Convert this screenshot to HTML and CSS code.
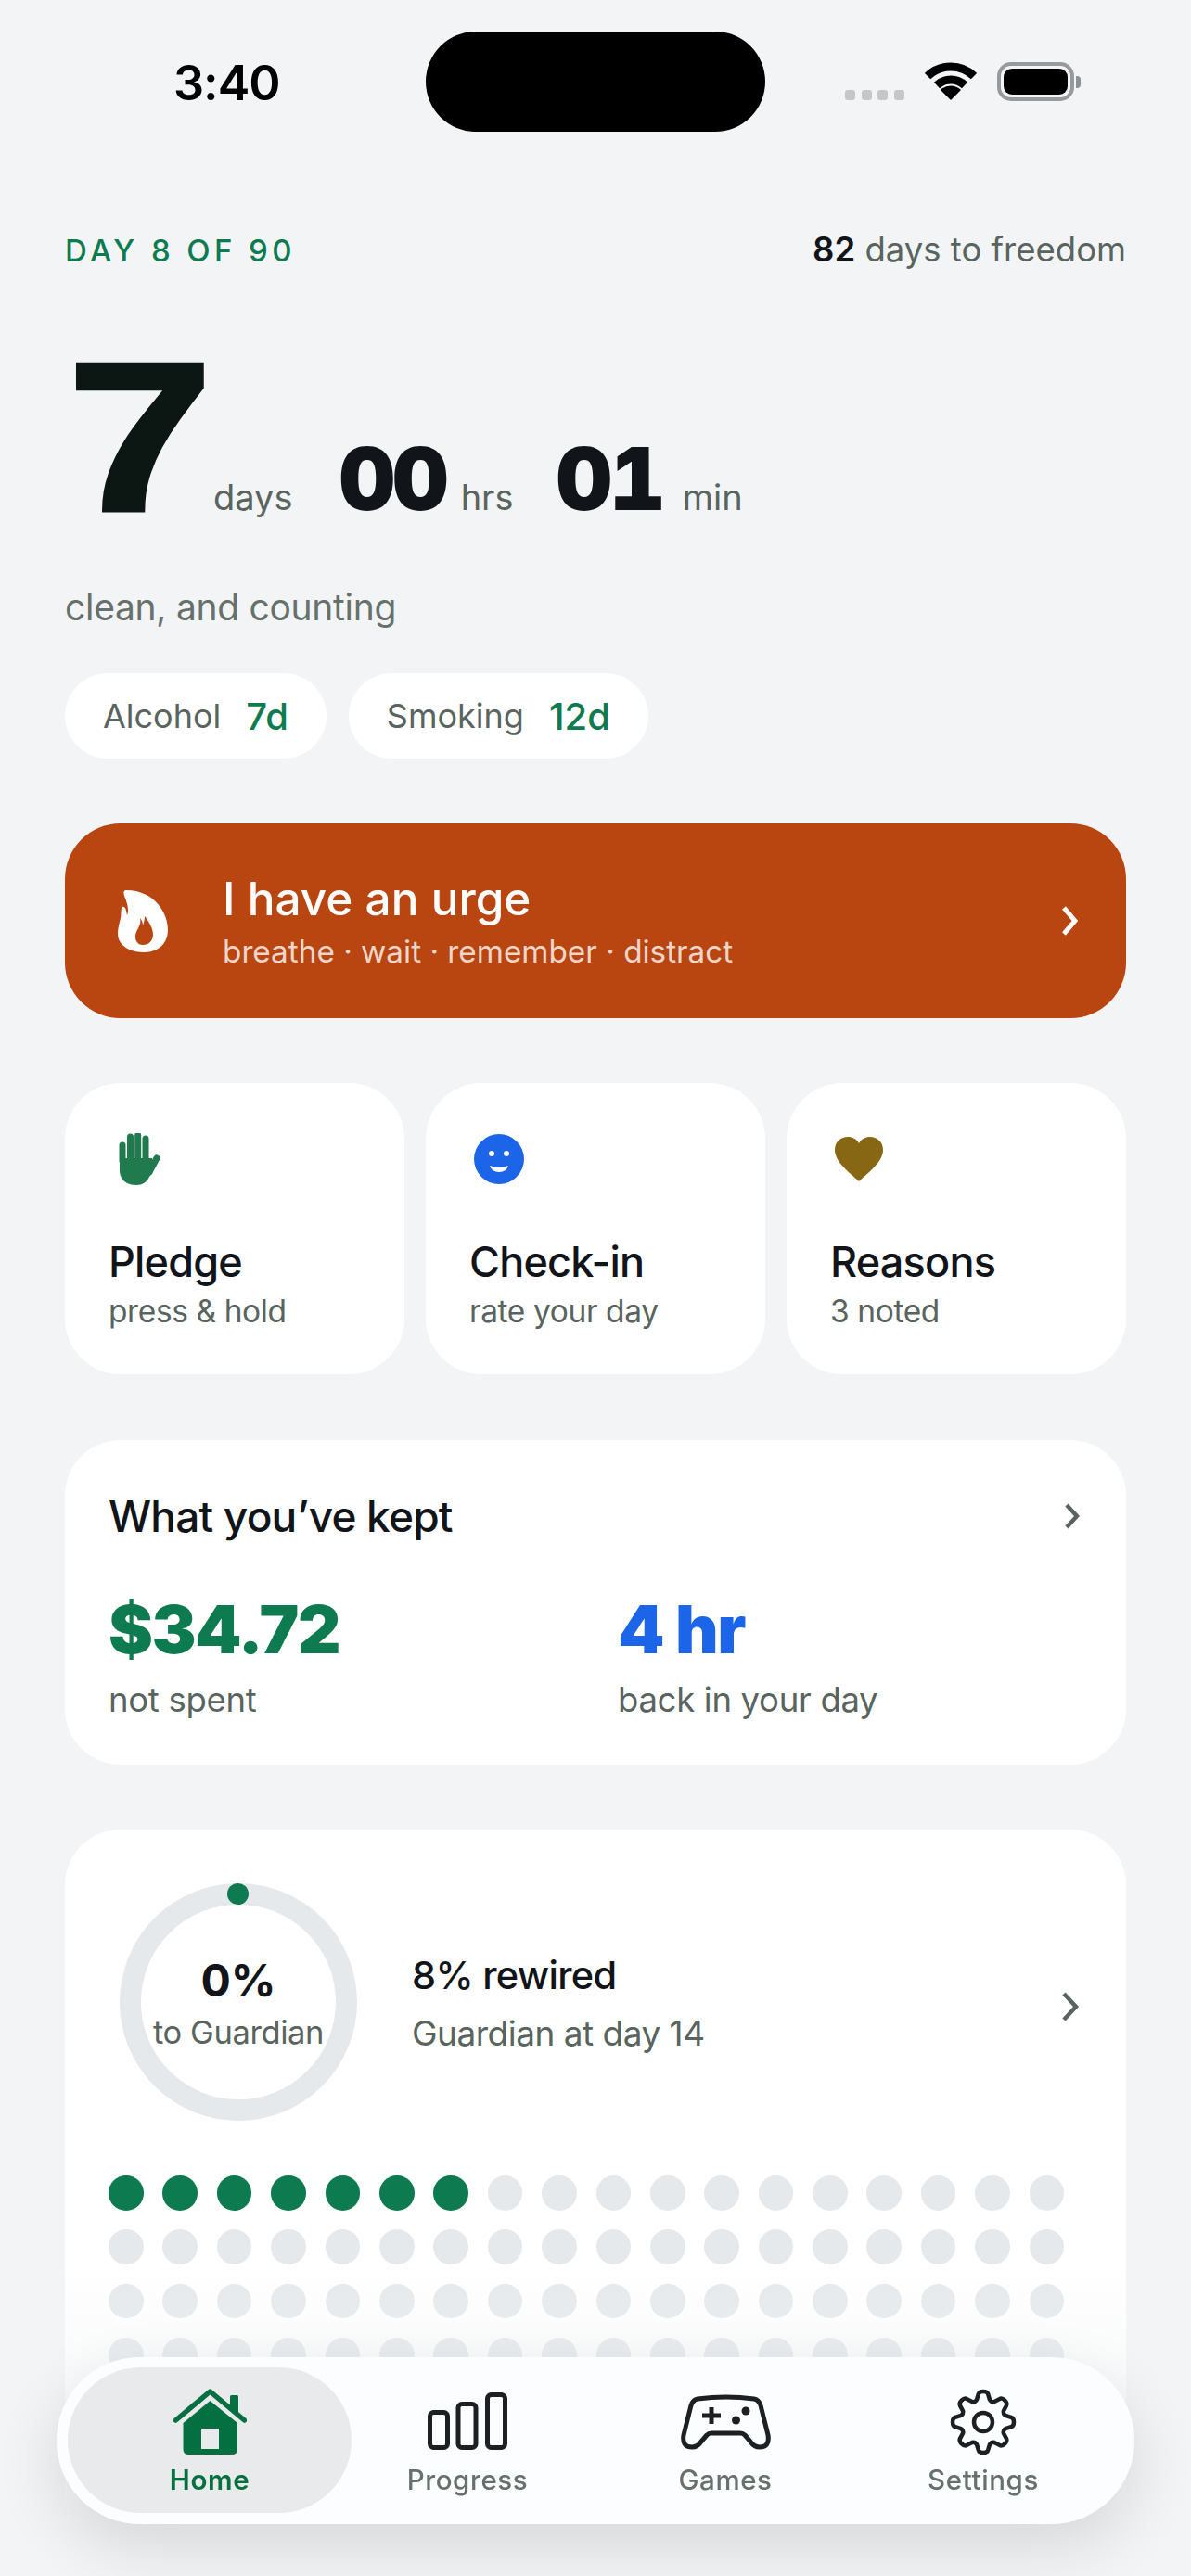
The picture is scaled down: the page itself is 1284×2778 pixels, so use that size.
FILE: index.html
```html
<!DOCTYPE html>
<html lang="en">
<head>
<meta charset="utf-8">
<title>Day 8 of 90</title>
<link rel="stylesheet" href="styles.css">
</head>
<body>
<div class="page">
  <div class="status">
    <span class="time">3:40</span>
    <div class="island"></div>
    <div class="signal"><i></i><i></i><i></i><i></i></div>
    <svg class="wifi" viewBox="0 0 56 41"><path class="wifi-arc" d="M3 15A36 36 0 0 1 53 15"/><path class="wifi-arc" d="M13 25A22 22 0 0 1 43 25"/><path d="M28 41L17 30A15.500 15.500 0 0 1 39 30Z"/></svg>
    <div class="battery"><div class="battery-fill"></div></div>
    <div class="battery-nub"></div>
  </div>

  <main class="content">
    <div class="head">
      <span class="day">DAY 8 OF 90</span>
      <span class="togo"><b>82</b> days to freedom</span>
    </div>

    <div class="counter">
      <span class="big">7</span><span class="unit u-days">days</span>
      <span class="mid m-hrs">00</span><span class="unit u-hrs">hrs</span>
      <span class="mid m-min">01</span><span class="unit u-min">min</span>
    </div>
    <p class="clean">clean, and counting</p>

    <div class="pills">
      <div class="pill">Alcohol<b>7d</b></div>
      <div class="pill">Smoking<b>12d</b></div>
    </div>

    <div class="urge">
      <svg class="flame" viewBox="0 0 54 68"><path fill="#fff" d="M9 1C6 1 6 4 7 7C11 16 12 24 10 28C9 22 8 18 5 19C3 20 4 26 3 31C1 39 0 43 0 48C0 60 12 68 28 68C44 68 54 58 54 44C54 26 40 1 9 1Z"/><path fill="#b94510" d="M24 31C25 36 24 38 21 44C17 51 19 60 27 60C36 60 40 52 37 43C35 37 32 33 29 29C29 33 28 36 27 39C27 36 26 33 24 31Z"/></svg>
      <div class="urge-text">
        <div class="urge-title">I have an urge</div>
        <div class="urge-sub">breathe · wait · remember · distract</div>
      </div>
      <svg class="urge-chev" viewBox="0 0 18 32"><path d="M3 2L15 16L3 30"/></svg>
    </div>

    <div class="actions">
      <div class="action">
        <svg class="ic ic-hand" viewBox="0 0 44 56"><g class="hand-f"><path d="M4 30V13"/><path d="M12.500 30V4"/><path d="M20.700 30V2.500"/><path d="M29 30V6"/><path d="M33 42L41 27"/></g><path fill="#1f7a4d" d="M1 27H36V40C33 49 29 56 19 56C8 56 1 50 1 40Z"/></svg>
        <div class="a-title">Pledge</div>
        <div class="a-sub">press &amp; hold</div>
      </div>
      <div class="action">
        <svg class="ic ic-face" viewBox="0 0 54 54"><circle cx="27" cy="27" r="27" fill="#1c64e8"/><circle cx="19" cy="21" r="3" fill="#fff"/><circle cx="35" cy="21" r="3" fill="#fff"/><path fill="#fff" d="M17 34Q27 38 37 34Q35 41 27 41Q19 41 17 34Z"/></svg>
        <div class="a-title">Check-in</div>
        <div class="a-sub">rate your day</div>
      </div>
      <div class="action">
        <svg class="ic ic-heart" viewBox="0 0 52 48"><path fill="#876614" d="M26 48C18 40 0 28 0 14C0 5 7 0 14 0C19 0 23 2 26 7C29 2 33 0 38 0C45 0 52 5 52 14C52 28 34 40 26 48Z"/></svg>
        <div class="a-title">Reasons</div>
        <div class="a-sub">3 noted</div>
      </div>
    </div>

    <section class="card kept">
      <div class="kept-head">
        <span class="kept-title">What you’ve kept</span>
        <svg class="chev" viewBox="0 0 16 28"><path d="M2 2L13 14L2 26"/></svg>
      </div>
      <div class="kept-row">
        <div class="kept-col"><div class="amount green">$34.72</div><div class="kept-sub">not spent</div></div>
        <div class="kept-col"><div class="amount blue">4 hr</div><div class="kept-sub">back in your day</div></div>
      </div>
    </section>

    <section class="card rewired">
      <div class="ring-row">
        <div class="ring">
          <div class="ring-dot"></div>
          <div class="ring-pct">0%</div>
          <div class="ring-sub">to Guardian</div>
        </div>
        <div class="ring-info">
          <div class="ring-title">8% rewired</div>
          <div class="ring-note">Guardian at day 14</div>
        </div>
        <svg class="chev chev-lg" viewBox="0 0 20 32"><path d="M3 2L16 16L3 30"/></svg>
      </div>
      <div class="dots">
        <i class="on"></i><i class="on"></i><i class="on"></i><i class="on"></i><i class="on"></i><i class="on"></i><i class="on"></i><i></i><i></i><i></i><i></i><i></i><i></i><i></i><i></i><i></i><i></i><i></i>
        <i></i><i></i><i></i><i></i><i></i><i></i><i></i><i></i><i></i><i></i><i></i><i></i><i></i><i></i><i></i><i></i><i></i><i></i>
        <i></i><i></i><i></i><i></i><i></i><i></i><i></i><i></i><i></i><i></i><i></i><i></i><i></i><i></i><i></i><i></i><i></i><i></i>
        <i></i><i></i><i></i><i></i><i></i><i></i><i></i><i></i><i></i><i></i><i></i><i></i><i></i><i></i><i></i><i></i><i></i><i></i>
        <i></i><i></i><i></i><i></i><i></i><i></i><i></i><i></i><i></i><i></i><i></i><i></i><i></i><i></i><i></i><i></i><i></i><i></i>
      </div>
    </section>
  </main>

  <div class="fade"></div>
  <nav class="tabbar">
    <div class="tab tab-active">
      <svg class="t-home" viewBox="0 0 79 71"><path class="roof" d="M2.500 34L39.500 3L76.500 34"/><path fill="#047041" d="M61 8.500Q61 7 62.500 7H68.500Q70 7 70 8.500V30L61 22Z"/><path fill="#047041" fill-rule="evenodd" d="M39.500 13L69 37V65Q69 71 63 71H16Q10.500 71 10.500 65V37ZM30 43V65H49V43Z"/></svg>
      <span>Home</span>
    </div>
    <div class="tab">
      <svg class="t-bars" viewBox="0 0 86 62"><rect x="2.500" y="21.500" width="19" height="38" rx="4"/><rect x="33" y="12.500" width="19" height="47" rx="4"/><rect x="64.500" y="2.500" width="19" height="57" rx="4"/></svg>
      <span>Progress</span>
    </div>
    <div class="tab">
      <svg class="t-game" viewBox="0 0 97 60"><path d="M18 5Q49 1 79 5Q84 6 86 12L94 44Q96 57 85 57Q79 57 75 51L69 44Q67 42 64 42H33Q30 42 28 44L22 51Q18 57 12 57Q1 57 3 44L11 12Q13 6 18 5Z"/><path d="M33 14V32M23 23H43"/><circle class="solid" cx="59.500" cy="28" r="4.500"/><circle class="solid" cx="70" cy="18" r="4.500"/></svg>
      <span>Games</span>
    </div>
    <div class="tab">
      <svg class="t-gear" viewBox="-36 -36 72 72">
        <defs><path id="tooth" d="M-9.180 -22.170Q-7.500 -22.800 -7 -24L-5.200 -30Q-4.500 -33 0 -33Q4.500 -33 5.200 -30L7 -24Q7.500 -22.800 9.180 -22.170"/></defs>
        <use href="#tooth"/><use href="#tooth" transform="rotate(45)"/><use href="#tooth" transform="rotate(90)"/><use href="#tooth" transform="rotate(135)"/><use href="#tooth" transform="rotate(180)"/><use href="#tooth" transform="rotate(225)"/><use href="#tooth" transform="rotate(270)"/><use href="#tooth" transform="rotate(315)"/>
        <circle cx="0" cy="0" r="10"/>
      </svg>
      <span>Settings</span>
    </div>
  </nav>
</div>
</body>
</html>
```

FILE: styles.css
```css
* { box-sizing: border-box; }
html, body { margin: 0; height: 2778px; overflow: hidden; }
body { background: #f2f4f6; font-family: Inter, "Liberation Sans", sans-serif; color: #11151a; }
.page { position: relative; width: 1284px; height: 2778px; overflow: hidden; }

/* status bar */
.status { display: flex; align-items: flex-start; height: 142px; padding: 34px 0 0 187px; }
.time { width: 272px; margin-top: 26px; font-size: 52px; line-height: 60px; font-weight: 600; letter-spacing: -1px; color: #000; }
.island { width: 366px; height: 108px; border-radius: 54px; background: #000; }
.signal { display: flex; gap: 6.500px; margin: 63px 0 0 86px; }
.signal i { width: 11px; height: 11px; border-radius: 3px; background: #c4c6c8; }
.wifi { width: 56px; height: 41px; margin: 33px 0 0 22px; }
.wifi-arc { fill: none; stroke: #000; stroke-width: 9; }
.battery { width: 83px; height: 42px; margin: 33px 0 0 22px; padding: 3px; border: 4px solid #979a9c; border-radius: 15px; }
.battery-fill { width: 100%; height: 100%; border-radius: 9px; background: #000; }
.battery-nub { width: 5px; height: 13px; margin: 48px 0 0 2px; border-radius: 0 4px 4px 0; background: #8e9092; }

/* content */
.content { padding: 0 70px; }
.head { display: flex; justify-content: space-between; align-items: baseline; margin-top: 105px; height: 44px; line-height: 44px; }
.day { font-size: 33px; font-weight: 500; letter-spacing: 4.400px; color: #0d7a4f; }
.togo { font-size: 36.500px; color: #59645f; }
.togo b { font-weight: 600; color: #11151a; }

.counter { display: flex; align-items: baseline; height: 230px; margin-top: 65px; line-height: 230px; font-variant-numeric: tabular-nums; }
.big { display: inline-block; width: 144px; font-family: "Liberation Sans", Arial, sans-serif; font-size: 228px; font-weight: 700; color: #0c1612; -webkit-text-stroke: 5px #0c1612; transform: scaleX(1.23); transform-origin: left; margin-left: 3px; }
.mid { font-size: 94px; font-weight: 900; color: #11151a; letter-spacing: -3px; }
.unit { font-size: 38px; color: #59645f; }
.u-days { margin-left: 13px; }
.m-hrs { margin-left: 50px; }
.u-hrs { margin-left: 16px; }
.m-min { margin-left: 46px; }
.u-min { margin-left: 21px; }

.clean { margin: 45px 0 0; font-size: 39px; line-height: 48px; color: #66716c; letter-spacing: -0.300px; }

.pills { display: flex; gap: 24px; margin-top: 47px; }
.pill { display: flex; align-items: center; height: 92px; padding: 0 41px; border-radius: 46px; background: #fff; font-size: 36px; color: #59645f; }
.pill b { margin-left: 27px; font-size: 40px; font-weight: 500; color: #0d7a4f; }

.urge { display: flex; align-items: center; height: 210px; margin-top: 70px; padding: 0 40px 0 57px; border-radius: 60px; background: #b94510; color: #fff; }
.flame { flex: none; width: 54px; height: 68px; }
.urge-text { flex: 1; margin-left: 59px; }
.urge-title { font-size: 49.500px; line-height: 58px; font-weight: 500; }
.urge-sub { margin-top: 8px; font-size: 33.300px; line-height: 40px; color: rgba(255,255,255,.78); }
.urge-chev { width: 18px; height: 32px; margin-right: 12px; }
.urge-chev path { fill: none; stroke: #fff; stroke-width: 5; }

.actions { display: grid; grid-template-columns: repeat(3, 1fr); gap: 23px; margin-top: 70px; }
.action { display: flex; flex-direction: column; height: 314px; padding: 54px 47px 0; border-radius: 60px; background: #fff; }
.ic { display: block; flex: none; height: 56px; }
.ic-hand { width: 44px; margin-left: 11px; }
.hand-f path { fill: none; stroke: #1f7a4d; stroke-width: 7; stroke-linecap: round; }
.ic-face { width: 54px; margin-left: 5px; }
.ic-heart { width: 52px; height: 48px; margin: 4px 0 4px 5px; }
.a-title { margin-top: 55px; font-size: 45px; line-height: 56px; font-weight: 500; color: #11151a; letter-spacing: -0.800px; }
.a-sub { margin-top: 3px; font-size: 33.500px; line-height: 44px; color: #59645f; letter-spacing: -0.400px; }

.card { background: #fff; border-radius: 60px; }
.kept { height: 350px; margin-top: 71px; padding: 52px 48px 0 47px; }
.kept-head { display: flex; justify-content: space-between; align-items: center; height: 60px; }
.kept-title { font-size: 46px; font-weight: 500; letter-spacing: -0.800px; color: #11151a; }
.chev { width: 16px; height: 28px; margin-right: 2px; }
.chev path { fill: none; stroke: #59645f; stroke-width: 4.500; }
.kept-row { display: flex; margin-top: 50px; }
.kept-col { flex: none; width: 549px; }
.amount { font-size: 72px; line-height: 84px; font-weight: 900; letter-spacing: -1.500px; }
.green { color: #0d7a4f; }
.blue { color: #1c64e8; }
.kept-sub { margin-top: 12px; font-size: 36.500px; line-height: 44px; color: #59645f; letter-spacing: -0.300px; }

.rewired { height: 900px; margin-top: 70px; padding: 58px 48px 0 47px; }
.ring-row { display: flex; align-items: center; }
.ring { position: relative; flex: none; width: 256px; height: 256px; margin-left: 12px; border: 23px solid #e6e9ec; border-radius: 50%; text-align: center; }
.ring-dot { position: absolute; left: 93px; top: -23px; width: 23px; height: 23px; border-radius: 50%; background: #0d7a4f; }
.ring-pct { margin-top: 53px; font-size: 48px; line-height: 58px; font-weight: 700; color: #11151a; }
.ring-sub { margin: 5px -20px 0; font-size: 34.500px; line-height: 44px; color: #59645f; white-space: nowrap; letter-spacing: -0.400px; }
.ring-info { flex: 1; margin-left: 59px; padding-top: 3px; }
.ring-title { font-size: 41.500px; line-height: 52px; font-weight: 500; color: #11151a; letter-spacing: -0.700px; }
.ring-note { margin-top: 13px; font-size: 37px; line-height: 48px; color: #59645f; letter-spacing: -0.500px; }
.chev-lg { width: 20px; height: 32px; margin-top: 10px; }
.dots { display: grid; grid-template-columns: repeat(18, 37.600px); gap: 20.800px; margin-top: 59px; }
.dots i { height: 37.600px; border-radius: 50%; background: #e6e9ec; }
.dots i.on { background: #0d7a4f; }

/* bottom overlay */
.fade { position: absolute; left: 0; right: 0; bottom: 0; height: 340px; background: linear-gradient(to bottom, rgba(242,244,246,0) 0, rgba(242,244,246,.35) 30%, #f2f4f6 85%); }
.tabbar { position: absolute; left: 61px; top: 2542px; display: grid; grid-template-columns: repeat(4, 278px); width: 1162px; height: 180px; padding: 11px 0 12px 26px; border-radius: 90px; background: rgba(252,253,254,.94); backdrop-filter: blur(24px); box-shadow: 0 24px 70px rgba(0,0,0,.12); }
.tab { position: relative; display: flex; flex-direction: column; align-items: center; font-size: 29.500px; font-weight: 500; letter-spacing: .6px; color: #66716c; }
.tab span { position: absolute; top: 101px; line-height: 40px; }
.tab-active { margin: 0 -14px; border-radius: 79px; background: #e8eaeb; color: #047041; font-weight: 600; }
.tab svg { position: absolute; }
.t-home { width: 79px; height: 71px; top: 23px; }
.roof { fill: none; stroke: #047041; stroke-width: 5.500; stroke-linecap: round; stroke-linejoin: round; }
.t-bars { width: 86px; height: 62px; top: 27px; }
.t-bars rect { fill: none; stroke: #1d2022; stroke-width: 5; }
.t-game { width: 97px; height: 60px; top: 29px; }
.t-game path { fill: none; stroke: #1d2022; stroke-width: 5; stroke-linejoin: round; }
.t-game .solid { fill: #1d2022; }
.t-gear { width: 72px; height: 72px; top: 23px; }
.t-gear path, .t-gear circle { fill: none; stroke: #1d2022; stroke-width: 4.500; stroke-linecap: round; }
```
